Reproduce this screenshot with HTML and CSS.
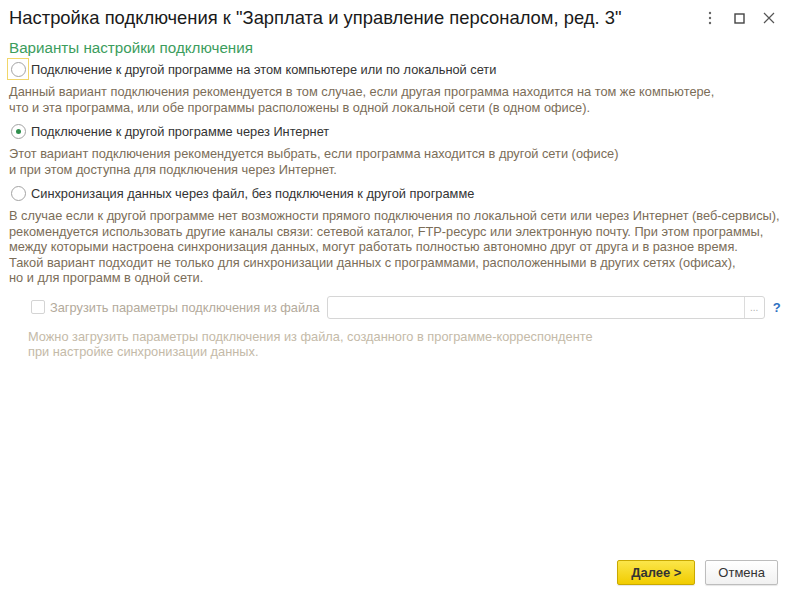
FILE: index.html
```html
<!DOCTYPE html>
<html lang="ru">
<head>
  <meta charset="UTF-8" />
  <meta name="viewport" content="width=device-width, initial-scale=1" />
  <title>Настройка подключения</title>
  <link rel="stylesheet" href="styles.css">
</head>
<body>
  <div class="window">
    <header class="titlebar">
      <h1>Настройка подключения к "Зарплата и управление персоналом, ред. 3"</h1>
      <div class="win-buttons">
        <span class="wb wb-more">
          <svg width="4" height="14" viewBox="0 0 4 14"><circle cx="2" cy="2" r="1.2" fill="#666"/><circle cx="2" cy="7" r="1.2" fill="#666"/><circle cx="2" cy="12" r="1.2" fill="#666"/></svg>
        </span>
        <span class="wb">
          <svg width="11" height="11" viewBox="0 0 11 11"><rect x="1" y="1" width="9" height="9" fill="none" stroke="#444" stroke-width="1.4"/></svg>
        </span>
        <span class="wb">
          <svg width="12" height="12" viewBox="0 0 12 12"><path d="M1 1 L11 11 M11 1 L1 11" stroke="#555" stroke-width="1.2"/></svg>
        </span>
      </div>
    </header>

    <main class="content">
      <h2 class="group-title">Варианты настройки подключения</h2>

      <div class="option">
        <label class="radio-row">
          <span class="radio-wrap focused"><span class="radio"></span></span>
          <span class="label">Подключение к другой программе на этом компьютере или по локальной сети</span>
        </label>
        <p class="note">Данный вариант подключения рекомендуется в том случае, если другая программа находится на том же компьютере,<br>что и эта программа, или обе программы расположены в одной локальной сети (в одном офисе).</p>
      </div>

      <div class="option">
        <label class="radio-row">
          <span class="radio-wrap"><span class="radio checked"></span></span>
          <span class="label">Подключение к другой программе через Интернет</span>
        </label>
        <p class="note">Этот вариант подключения рекомендуется выбрать, если программа находится в другой сети (офисе)<br>и при этом доступна для подключения через Интернет.</p>
      </div>

      <div class="option">
        <label class="radio-row">
          <span class="radio-wrap"><span class="radio"></span></span>
          <span class="label">Синхронизация данных через файл, без подключения к другой программе</span>
        </label>
        <p class="note">В случае если к другой программе нет возможности прямого подключения по локальной сети или через Интернет (веб-сервисы),<br>рекомендуется использовать другие каналы связи: сетевой каталог, FTP-ресурс или электронную почту. При этом программы,<br>между которыми настроена синхронизация данных, могут работать полностью автономно друг от друга и в разное время.<br>Такой вариант подходит не только для синхронизации данных с программами, расположенными в других сетях (офисах),<br>но и для программ в одной сети.</p>

        <div class="file-row">
          <span class="checkbox"></span>
          <span class="label disabled">Загрузить параметры подключения из файла</span>
          <div class="file-input">
            <span class="field"></span>
            <span class="pick">...</span>
          </div>
          <span class="help">?</span>
        </div>
        <p class="hint">Можно загрузить параметры подключения из файла, созданного в программе-корреспонденте<br>при настройке синхронизации данных.</p>
      </div>
    </main>

    <footer class="actions">
      <button class="btn btn-primary">Далее &gt;</button>
      <button class="btn">Отмена</button>
    </footer>
  </div>
</body>
</html>
```

FILE: styles.css
```css
:root {
  --text: #333333;
  --note: #7b6d58;
  --muted: #c4baa8;
  --green: #3c9d5d;
  --border: #b9b9b9;
}

* {
  box-sizing: border-box;
}

html, body {
  margin: 0;
  height: 100%;
}

body {
  font-family: Arial, "Liberation Sans", sans-serif;
  font-size: 12.8px;
  color: var(--text);
  background: #ffffff;
}

.window {
  display: flex;
  flex-direction: column;
  height: 100%;
}

.titlebar {
  display: flex;
  align-items: center;
  height: 36px;
  padding: 0 0 0 9px;
}

.titlebar h1 {
  flex: 1;
  margin: 0;
  font-size: 18.4px;
  font-weight: normal;
  color: #1a1a1a;
  white-space: nowrap;
}

.win-buttons {
  display: flex;
  align-items: center;
  margin-right: 13px;
}

.wb {
  display: flex;
  align-items: center;
  justify-content: center;
  width: 30px;
  height: 20px;
}

.wb-more {
  width: 28px;
}

.content {
  padding: 0 9px;
}

.group-title {
  margin: 2px 0 0;
  font-size: 15.2px;
  line-height: 20px;
  font-weight: normal;
  color: var(--green);
}

.option {
  margin-bottom: 5px;
}

.radio-row {
  display: flex;
  align-items: center;
  height: 22px;
}

.radio-wrap {
  display: flex;
  align-items: center;
  justify-content: center;
  width: 22px;
  height: 22px;
  margin-left: -2px;
  margin-right: 2px;
  border: 1px solid transparent;
}

.radio-wrap.focused {
  border-color: #f1d66a;
}

.radio {
  position: relative;
  width: 15px;
  height: 15px;
  border: 1px solid #a3a3a3;
  border-radius: 50%;
  background: #fff;
}

.radio.checked::after {
  content: "";
  position: absolute;
  left: 4px;
  top: 4px;
  width: 5px;
  height: 5px;
  border-radius: 50%;
  background: #2f8f4e;
}

.label {
  white-space: nowrap;
}

.note {
  margin: 4px 0 0;
  line-height: 15.5px;
  color: var(--note);
  white-space: nowrap;
}

.file-row {
  display: flex;
  align-items: center;
  margin: 10px 0 0 22px;
  height: 23px;
}

.checkbox {
  width: 14px;
  height: 14px;
  border: 1px solid #d4d4d4;
  border-radius: 2px;
  margin-right: 5px;
}

.label.disabled {
  color: #b3aa9b;
}

.file-input {
  display: flex;
  height: 23px;
  margin-left: 7px;
  width: 438px;
  border: 1px solid #d6d6d6;
  border-radius: 3px;
}

.field {
  flex: 1;
}

.pick {
  width: 20px;
  border-left: 1px solid #dcdcdc;
  color: #b0b0b0;
  font-size: 10px;
  text-align: center;
  line-height: 22px;
}

.help {
  margin-left: 8px;
  color: #2f71c1;
  font-weight: bold;
  font-size: 13px;
}

.hint {
  margin: 10px 0 0 19px;
  line-height: 15.5px;
  color: var(--muted);
  white-space: nowrap;
}

.actions {
  display: flex;
  justify-content: flex-end;
  gap: 10px;
  margin-top: auto;
  padding: 0 19px 11px 0;
}

.btn {
  height: 25px;
  min-width: 71px;
  padding: 0 12px;
  font-family: Arial, "Liberation Sans", sans-serif;
  font-size: 13px;
  color: #333;
  background: linear-gradient(#ffffff, #f1f1f1);
  border: 1px solid #bdbdbd;
  border-radius: 2px;
  box-shadow: 0 1px 1px rgba(0, 0, 0, 0.1);
}

.btn-primary {
  width: 78px;
  font-weight: bold;
  background: linear-gradient(#fbe64a, #f1cc00);
  border-color: #c9a900;
}
```
